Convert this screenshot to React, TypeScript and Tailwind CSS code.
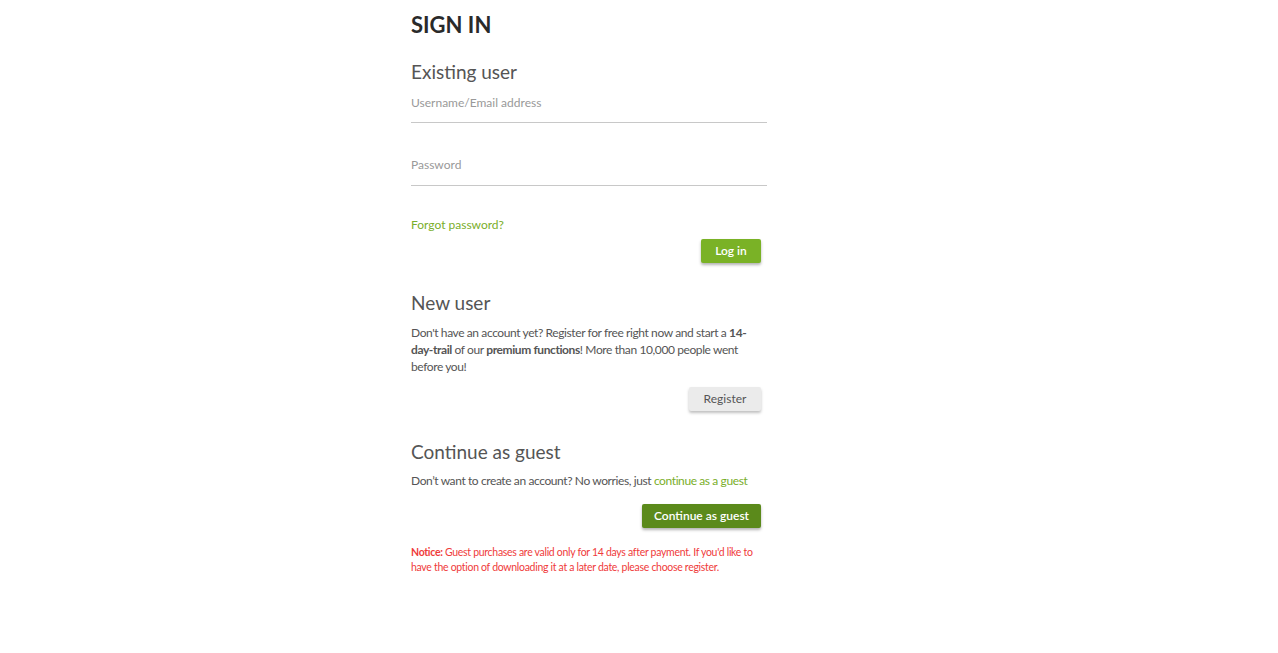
import React from "react";

export default function App() {
  const font = { fontFamily: "Lato, 'Noto Sans', sans-serif" };
  return (
    <div className="min-h-[653px] w-full bg-white" style={font}>
      <div className="w-[356px] pt-[12px] text-[#555]" style={{ marginLeft: 411 }}>
        <h1 className="text-[22px] font-bold leading-[26px] text-[#2a2a2a]">SIGN IN</h1>

        <h2 className="mt-[22px] text-[19px] leading-[24px] text-[#555]">Existing user</h2>
        <div className="mt-[11px] border-b border-[#c8c8c8] pb-[11px]">
          <div className="text-[12px] leading-[16px] text-[#999]">Username/Email address</div>
        </div>
        <div className="mt-[34px] border-b border-[#c8c8c8] pb-[12px]">
          <div className="text-[12px] leading-[16px] text-[#999]">Password</div>
        </div>
        <div className="mt-[31px] text-[12px] leading-[16px] text-[#7aae2a]">Forgot password?</div>
        <div className="mt-[6px] flex justify-end pr-[6px]">
          <button className="h-[24px] w-[60px] rounded-[2px] bg-[#7ab226] text-[12px] font-semibold text-white shadow-[0_2px_3px_rgba(0,0,0,0.3)]">
            Log in
          </button>
        </div>

        <h2 className="mt-[28px] text-[19px] leading-[24px] text-[#555]">New user</h2>
        <p className="mt-[9px] text-[12px] leading-[17px] tracking-[-0.4px] text-[#555]">
          Don't have an account yet? Register for free right now and start a <b className="font-bold">14-day-trail</b> of
          our <b className="font-bold">premium functions</b>! More than 10,000 people went before you!
        </p>
        <div className="mt-[12px] flex justify-end pr-[6px]">
          <button className="h-[24px] w-[72px] rounded-[2px] bg-[#ebebeb] text-[12px] text-[#555] shadow-[0_2px_3px_rgba(0,0,0,0.25)]">
            Register
          </button>
        </div>

        <h2 className="mt-[29px] text-[19px] leading-[24px] text-[#555]">Continue as guest</h2>
        <p className="mt-[8px] whitespace-nowrap text-[12px] leading-[17px] tracking-[-0.4px] text-[#555]">
          Don’t want to create an account? No worries, just <span className="text-[#7aae2a]">continue as a guest</span>
        </p>
        <div className="mt-[15px] flex justify-end pr-[6px]">
          <button className="h-[24px] w-[119px] rounded-[2px] bg-[#5b8a1b] text-[12px] font-semibold text-white shadow-[0_2px_3px_rgba(0,0,0,0.3)]">
            Continue as guest
          </button>
        </div>

        <p className="mt-[17px] w-[345px] text-[10.5px] leading-[15px] tracking-[-0.3px] text-[#ef3b3b]">
          <b className="font-bold">Notice:</b> Guest purchases are valid only for 14 days after payment. If you'd like to
          have the option of downloading it at a later date, please choose register.
        </p>
      </div>
    </div>
  );
}
